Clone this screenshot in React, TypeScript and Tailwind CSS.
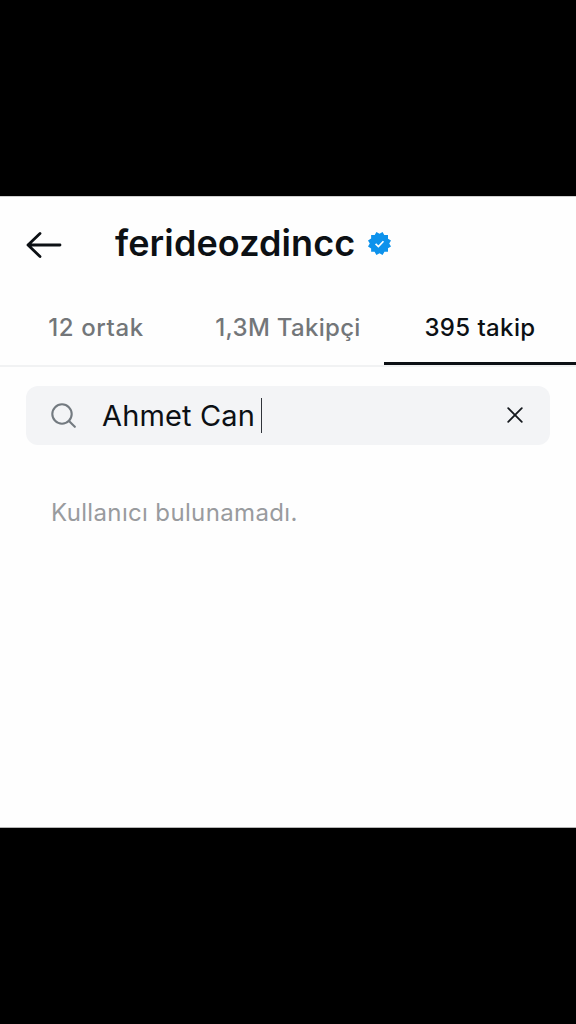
import React from 'react';

interface Tab {
  label: string;
  active?: boolean;
  className: string;
}

const tabs: Tab[] = [
  { label: '12 ortak', className: 'tracking-[0.6px]' },
  { label: '1,3M Takipçi', className: 'tracking-[0.3px]' },
  { label: '395 takip', active: true, className: 'tracking-[0.4px]' },
];

const BackIcon: React.FC = () => (
  <svg width="36" height="28" viewBox="0 0 36 28" className="mt-0.5" fill="none" stroke="#0c1014" strokeWidth="2.8" strokeLinecap="round" strokeLinejoin="round">
    <path d="M34 14H2M14 2.5L2 14l12 11.5" />
  </svg>
);

const VerifiedBadge: React.FC = () => (
  <svg width="23" height="23" viewBox="0 0 40 40" className="shrink-0">
    <path
      fill="#0d92ec"
      d="M19.998 3.094 14.638 0l-2.972 5.15H5.432v6.354L0 14.64 3.094 20 0 25.359l5.432 3.137v5.905h5.975L14.638 40l5.36-3.094L25.358 40l3.232-5.6h6.162v-6.01L40 25.359 36.905 20 40 14.641l-5.248-3.03v-6.46h-6.419L25.358 0l-5.36 3.094Z"
    />
    <path d="M13.2 20.5l4.9 4.8 8.8-9.2" fill="none" stroke="#fff" strokeWidth="3" />
  </svg>
);

const App: React.FC = () => {
  return (
    <div className="h-[1024px] w-[576px] overflow-hidden bg-black pt-[196px] font-['Inter',sans-serif] text-[#0c1014]">
      <div className="h-[632px] border-t border-b border-t-[#cfcfcf] border-b-[#b5b5b5] bg-[#fefefe]">
        {/* Header */}
        <header className="flex h-[94px] items-center pl-[26px]">
          <BackIcon />
          <h1 className="mb-0.5 ml-[53px] text-[36px] font-semibold leading-none tracking-[0.1px]">ferideozdincc</h1>
          <span className="mb-px ml-[13px]">
            <VerifiedBadge />
          </span>
        </header>

        {/* Tabs */}
        <nav className="grid h-[76px] grid-cols-3 border-b-2 border-[#f1f2f3]">
          {tabs.map((tab) => (
            <button
              key={tab.label}
              className={`flex h-[74px] items-center justify-center whitespace-nowrap border-b-3 pt-0.5 text-[24px] font-medium ${tab.className} ${
                tab.active ? 'border-[#0c1014]' : 'border-transparent text-[#737679]'
              }`}
            >
              {tab.label}
            </button>
          ))}
        </nav>

        {/* Search */}
        <div className="mx-[26px] mt-[19px] flex h-[59px] items-center rounded-[12px] bg-[#f3f4f6] pr-[27px] pl-[25px]">
          <svg width="25" height="25" viewBox="0 0 25 25" fill="none" stroke="#737a80" strokeWidth="2.1" strokeLinecap="round">
            <circle cx="11" cy="11" r="9.7" />
            <path d="M18 18l5.8 5.8" />
          </svg>
          <span className="mb-px ml-[26px] text-[29px] leading-none whitespace-nowrap tracking-[0.15px]">Ahmet Can</span>
          <span className="ml-[6px] h-[35px] w-px bg-[#30343a]" />
          <svg width="16" height="16" viewBox="0 0 16 16" className="mb-px ml-auto" stroke="#15191e" strokeWidth="1.8" strokeLinecap="round">
            <path d="M1.2 1.2l13.6 13.6M14.8 1.2L1.2 14.8" />
          </svg>
        </div>

        <p className="mt-[52px] ml-[51px] text-[24px] leading-8 tracking-[0.35px] text-[#999b9e]">Kullanıcı bulunamadı.</p>
      </div>
    </div>
  );
};

export default App;
